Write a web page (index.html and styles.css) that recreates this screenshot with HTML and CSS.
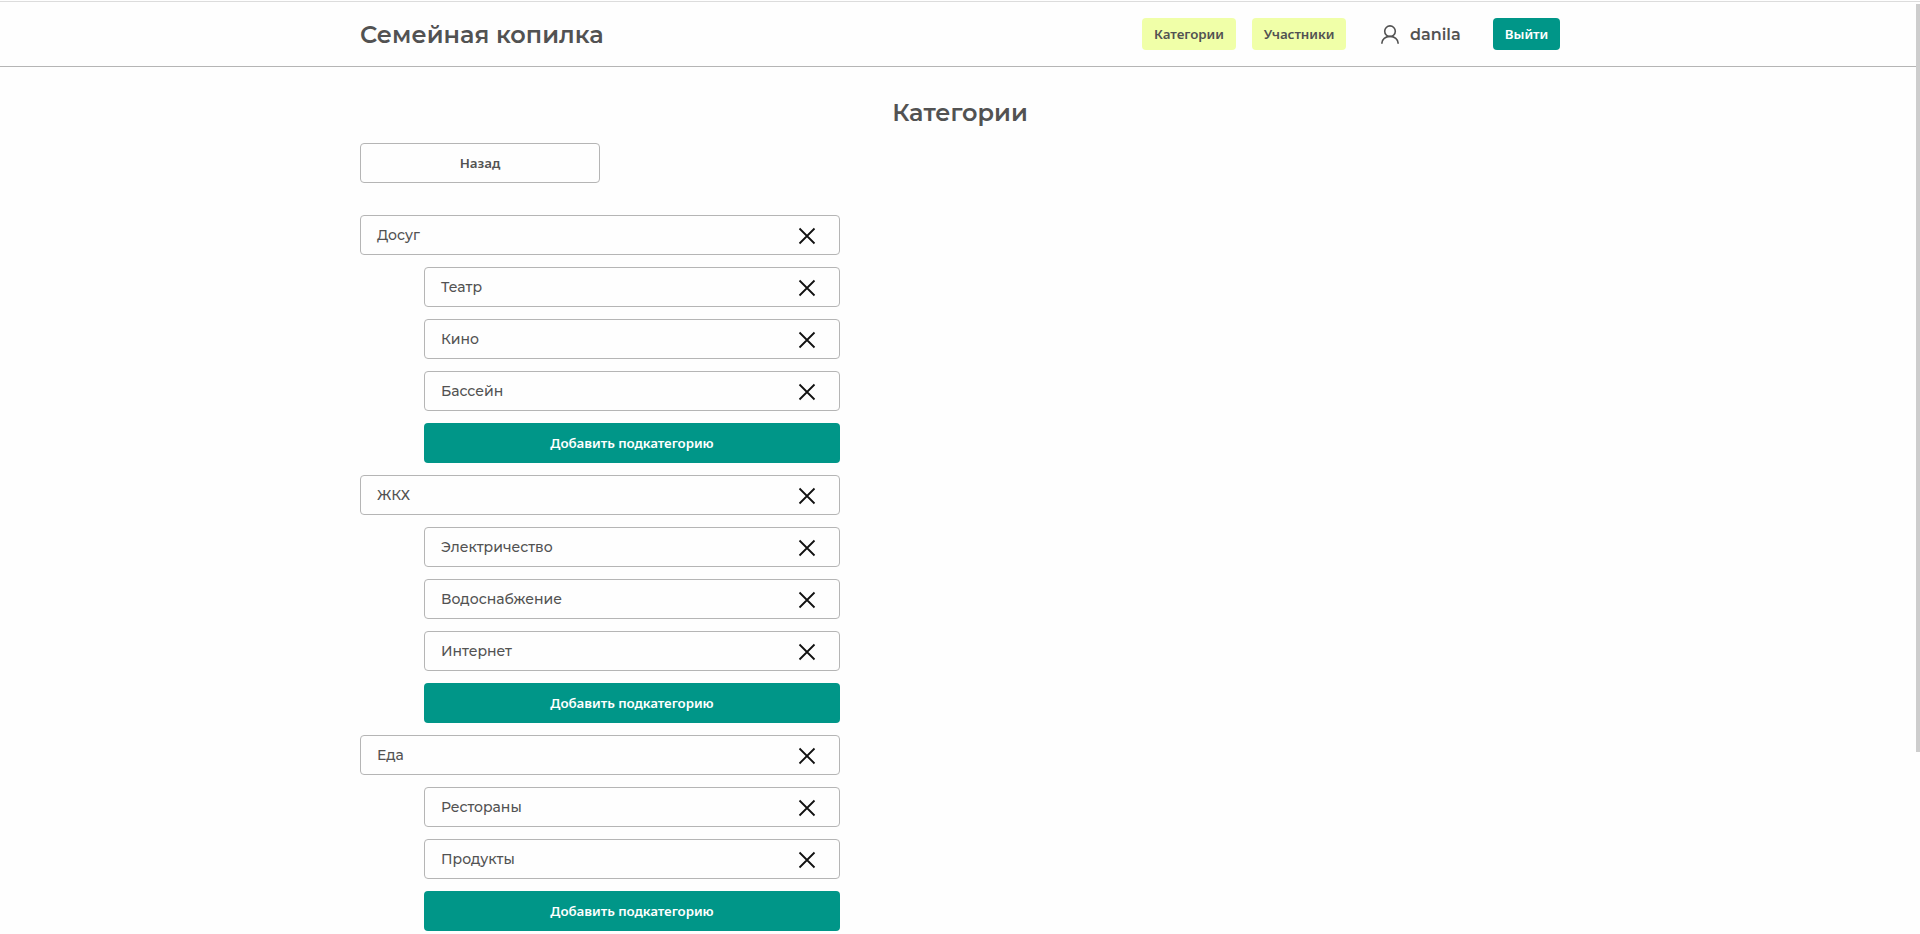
FILE: index.html
```html
<!DOCTYPE html>
<html lang="ru">
<head>
<meta charset="utf-8">
<title>Семейная копилка</title>
<link rel="stylesheet" href="styles.css">
</head>
<body>
<svg class="sprite" aria-hidden="true">
  <symbol id="cross" viewBox="0 0 24 24"><path d="M4.5 4.5L19.5 19.5M19.5 4.5L4.5 19.5"/></symbol>
</svg>
<header class="header">
  <div class="header-inner">
    <span class="logo">Семейная копилка</span>
    <nav class="nav">
      <button class="chip">Категории</button>
      <button class="chip">Участники</button>
      <span class="user">
        <svg class="user-icon" viewBox="0 0 18 19"><circle cx="9" cy="6.2" r="5.3"/><path d="M.9 18.8V18.1C.9 14.4 4.4 11.4 9 11.4S17.1 14.4 17.1 18.1V18.8"/></svg>
        <span class="user-name">danila</span>
      </span>
      <button class="logout">Выйти</button>
    </nav>
  </div>
</header>
<main class="page">
  <h1 class="title">Категории</h1>
  <button class="back">Назад</button>
  <div class="list">
    <div class="row"><span>Досуг</span><svg class="cross"><use href="#cross"/></svg></div>
    <div class="sub">
      <div class="row"><span>Театр</span><svg class="cross"><use href="#cross"/></svg></div>
      <div class="row"><span>Кино</span><svg class="cross"><use href="#cross"/></svg></div>
      <div class="row"><span>Бассейн</span><svg class="cross"><use href="#cross"/></svg></div>
      <button class="add">Добавить подкатегорию</button>
    </div>
    <div class="row"><span>ЖКХ</span><svg class="cross"><use href="#cross"/></svg></div>
    <div class="sub">
      <div class="row"><span>Электричество</span><svg class="cross"><use href="#cross"/></svg></div>
      <div class="row"><span>Водоснабжение</span><svg class="cross"><use href="#cross"/></svg></div>
      <div class="row"><span>Интернет</span><svg class="cross"><use href="#cross"/></svg></div>
      <button class="add">Добавить подкатегорию</button>
    </div>
    <div class="row"><span>Еда</span><svg class="cross"><use href="#cross"/></svg></div>
    <div class="sub">
      <div class="row"><span>Рестораны</span><svg class="cross"><use href="#cross"/></svg></div>
      <div class="row"><span>Продукты</span><svg class="cross"><use href="#cross"/></svg></div>
      <button class="add">Добавить подкатегорию</button>
    </div>
  </div>
</main>
<div class="scroll-thumb"></div>
</body>
</html>
```
FILE: styles.css
```css
* { box-sizing: border-box; }
body {
  margin: 0;
  padding-top: 1px;
  height: 934px;
  overflow: hidden;
  background: #fefefe;
  color: #525252;
  font-family: Montserrat, Inter, sans-serif;
}
button {
  margin: 0;
  padding: 0;
  border: 0;
  border-radius: 4px;
  color: #525252;
  font: 600 13.333px "Noto Sans", sans-serif;
  letter-spacing: -0.06px;
}
.sprite { display: none; }
.header {
  height: 66px;
  border-top: 1px solid #dcdcdc;
  border-bottom: 1px solid #b5b5b5;
}
.header-inner {
  display: flex;
  align-items: center;
  justify-content: space-between;
  width: 1200px;
  height: 64px;
  margin: 0 auto;
}
.logo { padding-top: 2px; font-size: 24px; font-weight: 600; line-height: 30px; }
.nav { display: flex; align-items: center; }
.chip { width: 94px; height: 32px; margin-right: 16px; background: #f0ffa8; }
.user { display: flex; align-items: center; width: 131px; padding-left: 19px; }
.user-icon {
  width: 18px;
  height: 19px;
  margin-right: 11px;
  fill: none;
  stroke: #525252;
  stroke-width: 1.6;
}
.user-name { font-size: 16px; font-weight: 600; }
.logout { width: 67px; height: 32px; background: #009688; color: #fff; }
.page { width: 1200px; margin: 0 auto; padding-top: 31px; }
.title { margin: 0 0 15px; text-align: center; font-size: 24px; font-weight: 600; line-height: 30px; }
.back { display: block; width: 240px; height: 40px; border: 1px solid #b5b5b5; background: transparent; }
.list { display: flex; flex-direction: column; gap: 12px; width: 480px; margin-top: 32px; }
.sub { display: flex; flex-direction: column; gap: 12px; padding-left: 64px; }
.row {
  display: flex;
  align-items: center;
  justify-content: space-between;
  height: 40px;
  padding: 0 20px 0 16px;
  border: 1px solid #b5b5b5;
  border-radius: 4px;
  font-size: 14px;
  font-weight: 500;
}
.cross { width: 24px; height: 24px; position: relative; top: 1px; fill: none; stroke: #111; stroke-width: 1.8; }
.add { height: 40px; background: #009688; color: #fff; }
.scroll-thumb { position: absolute; top: 4px; right: 0; width: 4px; height: 748px; background: #cdcdcd; }
```
